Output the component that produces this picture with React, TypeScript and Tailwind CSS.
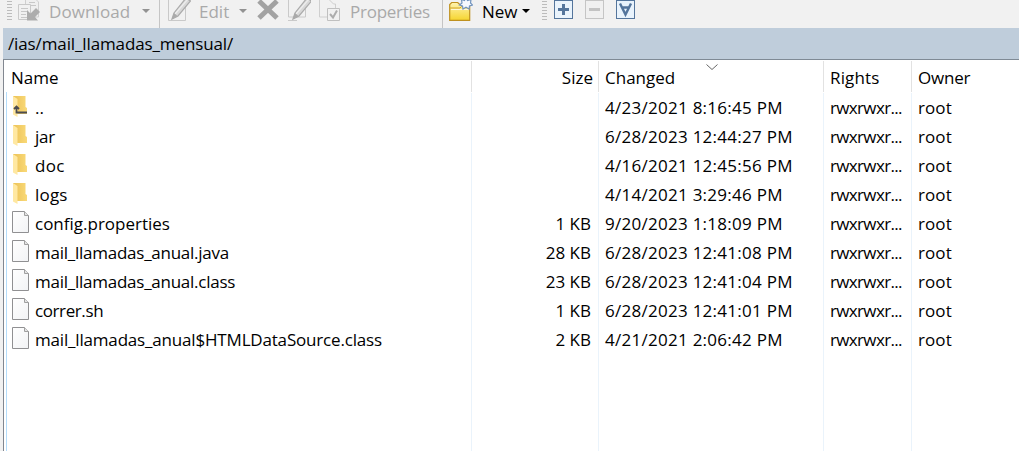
import React from 'react';

type Entry = {
  name: string;
  kind: 'up' | 'folder' | 'file';
  size?: string;
  changed: string;
  tracking?: string;
};

const entries: Entry[] = [
  { name: '..', kind: 'up', changed: '4/23/2021 8:16:45 PM' },
  { name: 'jar', kind: 'folder', changed: '6/28/2023 12:44:27 PM', tracking: 'tracking-[-0.3px]' },
  { name: 'doc', kind: 'folder', changed: '4/16/2021 12:45:56 PM', tracking: 'tracking-[0.3px]' },
  { name: 'logs', kind: 'folder', changed: '4/14/2021 3:29:46 PM', tracking: 'tracking-[0.2px]' },
  { name: 'config.properties', kind: 'file', size: '1 KB', changed: '9/20/2023 1:18:09 PM' },
  { name: 'mail_llamadas_anual.java', kind: 'file', size: '28 KB', changed: '6/28/2023 12:41:08 PM', tracking: 'tracking-[-0.25px]' },
  { name: 'mail_llamadas_anual.class', kind: 'file', size: '23 KB', changed: '6/28/2023 12:41:04 PM', tracking: 'tracking-[-0.25px]' },
  { name: 'correr.sh', kind: 'file', size: '1 KB', changed: '6/28/2023 12:41:01 PM', tracking: 'tracking-[-0.4px]' },
  { name: 'mail_llamadas_anual$HTMLDataSource.class', kind: 'file', size: '2 KB', changed: '4/21/2021 2:06:42 PM', tracking: 'tracking-[-0.18px]' },
];

function FolderIcon({ up }: { up?: boolean }) {
  return (
    <svg width="16" height="23" viewBox="0 0 16 23" className="block shrink-0">
      <defs>
        <linearGradient id="folderBack" x1="0" x2="1">
          <stop offset="0" stopColor="#ecc257" />
          <stop offset="1" stopColor="#f9d978" />
        </linearGradient>
      </defs>
      <path d="M1 1h12.500v11l1.500 1V19H1z" fill="url(#folderBack)" />
      <path d="M1 1l4.500 3v18L1 19.500z" fill="#ffe8a2" />
      {up && <path d="M4.500 17.500H15M4.500 18.500v-7M2 14l2.500-2.500L7 14" fill="none" stroke="#4c4c50" strokeWidth="1.800" />}
    </svg>
  );
}

function FileIcon() {
  return (
    <svg width="18" height="23" viewBox="0 0 18 23" className="block shrink-0">
      <defs>
        <linearGradient id="sheet" x1="0" y1="0" x2="1" y2="1">
          <stop offset="0" stopColor="#fff" />
          <stop offset="1" stopColor="#f2f3f5" />
        </linearGradient>
      </defs>
      <path d="M.5.5h12l4 4v17H.5z" fill="url(#sheet)" stroke="#909092" />
      <path d="M12.500.5v4h4" fill="#e4e4e4" stroke="#a0a0a0" />
    </svg>
  );
}

function Grip() {
  return (
    <svg width="5" height="28" className="block shrink-0">
      {[1, 4, 7, 10, 13, 16, 19].map((y) => (
        <rect key={y} x="0" y={y} width="5" height="1" fill="#bcbcbc" />
      ))}
    </svg>
  );
}

function Caret({ dark }: { dark?: boolean }) {
  return (
    <svg width="8" height="4" viewBox="0 0 8 4" className="block shrink-0">
      <path d="M0 0h8L4 4z" fill={dark ? '#000' : '#929292'} />
    </svg>
  );
}

function DownloadIcon() {
  return (
    <svg width="23" height="28" viewBox="0 0 23 28" fill="none" className="block shrink-0">
      <path d="M7.500-2h9l4 4v15h-13z" fill="#efefef" stroke="#cfcfcf" />
      <path d="M.5 4.500h12v15H.5z" fill="#f1f1f1" stroke="#c9c9c9" />
      <path d="M3 8.500h7M3 11.500h6M3 14.500h5M3 17.500h7M11 2.500h6M13 5.500h5" stroke="#c8c8c8" />
      <path d="M18 8l4 4-5 5 3 3.500H9V10l3.500 3.500z" fill="#adadad" />
    </svg>
  );
}

function Pencil({ x, y }: { x: number; y: number }) {
  return (
    <g transform={`translate(${x} ${y})`}>
      <path d="M0 19l2-6L14-2l4.500 3L6 16z" fill="#d8d8d8" stroke="#aaa" strokeWidth="1.200" />
      <path d="M3 14L16-1" stroke="#eee" strokeWidth="1.200" />
      <path d="M0 19l2-6 3.500 3z" fill="#aaa" />
    </g>
  );
}

function EditIcon() {
  return (
    <svg width="23" height="28" viewBox="0 0 23 28" fill="none" className="block shrink-0">
      <path d="M.5-1v21.500h17V-1" fill="#f1f1f1" stroke="#c9c9c9" />
      <Pencil x={4} y={0} />
    </svg>
  );
}

function DeleteIcon() {
  return (
    <svg width="22" height="28" viewBox="0 0 22 28" className="block shrink-0">
      <path d="M2 1l18 17M20 1L2 18" stroke="#a2a2a2" strokeWidth="5" />
    </svg>
  );
}

function RenameIcon() {
  return (
    <svg width="23" height="28" viewBox="0 0 23 28" fill="none" className="block shrink-0">
      <path d="M.5-1v18h17V-1M0 20.500h9" stroke="#cacaca" />
      <Pencil x={5} y={0} />
    </svg>
  );
}

function PropertiesIcon() {
  return (
    <svg width="22" height="28" viewBox="0 0 22 28" fill="none" className="block shrink-0">
      <path d="M.5-1v18h8M10.500 0l4 4h2v4" stroke="#cfcfcf" />
      <path d="M8.500 8.500h12v12h-12z" fill="#f1f1f1" stroke="#c0c0c0" />
      <path d="M11 14l3 3.500 4-7" stroke="#adadad" strokeWidth="2" />
    </svg>
  );
}

function NewFolderIcon() {
  return (
    <svg width="24" height="28" viewBox="0 0 24 28" className="block shrink-0">
      <defs>
        <linearGradient id="newFolder" x1="0" x2="0" y1="0" y2="1">
          <stop offset="0" stopColor="#fff3b0" />
          <stop offset="1" stopColor="#f5d52f" />
        </linearGradient>
      </defs>
      <path d="M.7 20.300V4.500l2-2h6l2 2h10v15.800z" fill="url(#newFolder)" stroke="#bf911f" strokeWidth="1.200" />
      <path d="M1 8h10l1.500-1.500H20" fill="none" stroke="#d0a42e" />
      <path d="M2 9.500h18" stroke="#fff8d8" />
      <path d="M17-3l1.500 3.500L22-.5l-.5 3.500L23.500 5l-3 1-.5 3-3-1.800L14 9l-.5-3-3-1 2.500-2-.5-3.500L15.500.5z" fill="#f5f9ff" stroke="#7193bd" strokeWidth="1.200" />
    </svg>
  );
}

function SelectIcon({ kind }: { kind: 'plus' | 'minus' | 'all' }) {
  const off = kind === 'minus';
  return (
    <svg width="19" height="20" viewBox="0 0 19 20" className="block shrink-0">
      <rect x=".5" y=".5" width="18" height="18" fill={off ? '#f0f0f0' : '#e9f3fc'} stroke={off ? '#c5c5c5' : '#54759c'} />
      {kind === 'plus' && <path d="M4 9.500h11M9.500 4v11" stroke="#54759c" strokeWidth="3" />}
      {off && <path d="M4 9.500h11" stroke="#c3c3c3" strokeWidth="3" />}
      {kind === 'all' && <path d="M4 3.500l5.500 11 5.500-11M6 7.500h7" fill="none" stroke="#54759c" strokeWidth="2.400" />}
    </svg>
  );
}

function NameCell({ entry }: { entry: Entry }) {
  return (
    <div className="flex w-[468px] shrink-0 border-r border-[#eaf3fb] pl-2">
      <div className="w-[23px] shrink-0 pt-0.5">
        {entry.kind === 'file' ? <FileIcon /> : <FolderIcon up={entry.kind === 'up'} />}
      </div>
      <span className={entry.tracking}>{entry.name}</span>
    </div>
  );
}

export default function App() {
  return (
    <div className="flex h-[451px] w-[1019px] flex-col overflow-hidden bg-[#f1f1f1] font-['Open_Sans','Noto_Sans',sans-serif] text-[17px] leading-[29px] whitespace-nowrap text-black">
      <div className="flex h-7 shrink-0 text-[#a9a9a9]">
        <div className="flex w-[160px] shrink-0 border-r border-[#c5c5c5] pl-[7px]">
          <Grip />
          <div className="ml-1.5 w-[31px]"><DownloadIcon /></div>
          <span className="-mt-[3px] w-[93px] tracking-[0.1px]">Download</span>
          <div className="pt-[9px]"><Caret /></div>
        </div>
        <div className="flex w-[283px] shrink-0 border-r border-[#c5c5c5] pl-2">
          <div className="w-[31px] shrink-0"><EditIcon /></div>
          <span className="-mt-[3px] w-10 shrink-0">Edit</span>
          <div className="w-[18px] shrink-0 pt-[9px]"><Caret /></div>
          <div className="w-[31px] shrink-0"><DeleteIcon /></div>
          <div className="w-[31px] shrink-0"><RenameIcon /></div>
          <div className="w-[31px] shrink-0"><PropertiesIcon /></div>
          <span className="-mt-[3px] tracking-[-0.25px]">Properties</span>
        </div>
        <div className="flex pl-[6px] text-black">
          <div className="w-[33px] shrink-0"><NewFolderIcon /></div>
          <span className="-mt-[3px] w-10 shrink-0">New</span>
          <div className="w-5 shrink-0 pt-[9px]"><Caret dark /></div>
          <Grip />
          <div className="flex gap-3 pl-[7px]">
            <SelectIcon kind="plus" />
            <SelectIcon kind="minus" />
            <SelectIcon kind="all" />
          </div>
        </div>
      </div>
      <div className="ml-[3px] h-8 shrink-0 border-b border-[#7f8a95] bg-[#bfcddb] pl-[5px] leading-[32px]">
        <span className="tracking-[-0.12px]">/ias/mail_llamadas_mensual/</span>
      </div>
      <div className="ml-[3px] flex min-h-0 flex-1 flex-col border-l border-[#828790] bg-white">
        <div className="flex h-8 shrink-0 pt-px leading-[33px] *:border-[#e2e2e2]">
          <div className="w-[468px] shrink-0 border-r pl-[7px]"><span>Name</span></div>
          <div className="w-[127px] shrink-0 border-r pr-[5px] text-right"><span>Size</span></div>
          <div className="flex w-[225px] shrink-0 border-r pl-1.5">
            <span className="w-[101px]">Changed</span>
            <svg width="12" height="7" viewBox="0 0 12 7" className="mt-[3px] block">
              <path d="M.5.5L6 5.500 11.500.5" fill="none" stroke="#666" />
            </svg>
          </div>
          <div className="w-[88px] shrink-0 border-r pl-1.5"><span className="tracking-[0.15px]">Rights</span></div>
          <div className="pl-1.5"><span className="tracking-[-0.2px]">Owner</span></div>
        </div>
        <div className="ml-[2px] flex min-h-0 flex-1 flex-col border-l border-[#b4dcfa]">
          <div className="-ml-[3px] flex min-h-0 flex-1 flex-col pt-px">
            {entries.map((e) => (
              <div key={e.name} className="flex h-[29px] shrink-0">
                <NameCell entry={e} />
                <div className="w-[127px] shrink-0 border-r border-[#eaf3fb] pr-[7px] text-right"><span>{e.size}</span></div>
                <div className="w-[225px] shrink-0 border-r border-[#eaf3fb] pl-1.5"><span className="tracking-[0.27px]">{e.changed}</span></div>
                <div className="w-[88px] shrink-0 border-r border-[#eaf3fb] pl-1.5"><span className="tracking-[-0.65px]">rwxrwxr...</span></div>
                <div className="pl-1.5"><span className="tracking-[0.1px]">root</span></div>
              </div>
            ))}
            <div className="flex flex-1 *:shrink-0 *:border-r *:border-[#eaf3fb]">
              <div className="w-[468px]" />
              <div className="w-[127px]" />
              <div className="w-[225px]" />
              <div className="w-[88px]" />
            </div>
          </div>
        </div>
      </div>
    </div>
  );
}
